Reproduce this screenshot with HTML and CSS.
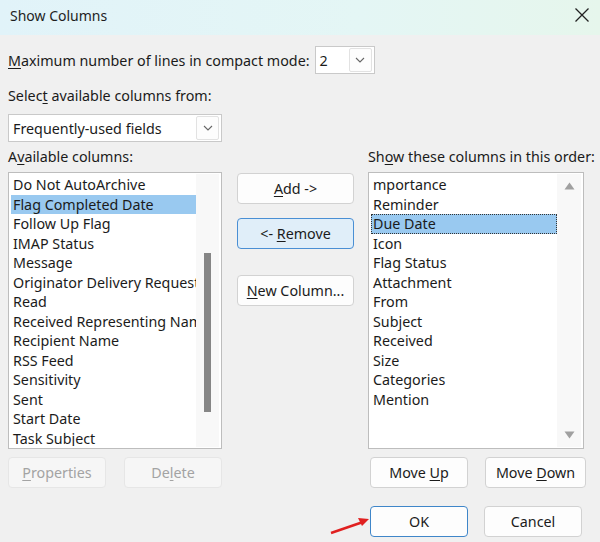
FILE: index.html
```html
<!DOCTYPE html>
<html>
<head>
<meta charset="utf-8">
<link rel="stylesheet" href="styles.css">
</head>
<body>
<div class="dialog">
  <div class="titlebar">
    <span class="title">Show Columns</span>
    <svg class="close" width="16" height="16" viewBox="0 0 16 16"><path d="M1.5 1.5 L14.5 14.5 M14.5 1.5 L1.5 14.5" stroke="#222" stroke-width="1.3" fill="none"/></svg>
  </div>
  <div class="content">
    <div class="row1">
      <span class="lbl"><u>M</u>aximum number of lines in compact mode:</span>
      <div class="combo small"><span class="val">2</span><span class="arrowbox"><svg width="10" height="6" viewBox="0 0 10 6"><path d="M1 1 L5 5 L9 1" stroke="#666" stroke-width="1.1" fill="none"/></svg></span></div>
    </div>
    <div class="lbl sel-label">Selec<u>t</u> available columns from:</div>
    <div class="combo wide"><span class="val">Frequently-used fields</span><span class="arrowbox"><svg width="10" height="6" viewBox="0 0 10 6"><path d="M1 1 L5 5 L9 1" stroke="#666" stroke-width="1.1" fill="none"/></svg></span></div>

    <div class="grid">
      <div class="lbl colhead">A<u>v</u>ailable columns:</div>
      <div></div>
      <div class="lbl colhead">Sh<u>o</u>w these columns in this order:</div>

      <div class="list">
        <div class="items">
          <div class="item">Do Not AutoArchive</div>
          <div class="item selected">Flag Completed Date</div>
          <div class="item">Follow Up Flag</div>
          <div class="item">IMAP Status</div>
          <div class="item">Message</div>
          <div class="item">Originator Delivery Request</div>
          <div class="item">Read</div>
          <div class="item">Received Representing Name</div>
          <div class="item">Recipient Name</div>
          <div class="item">RSS Feed</div>
          <div class="item">Sensitivity</div>
          <div class="item">Sent</div>
          <div class="item">Start Date</div>
          <div class="item">Task Subject</div>
        </div>
        <div class="scroll"><div class="thumb"></div></div>
      </div>

      <div class="midbtns">
        <button class="btn"><u>A</u>dd -&gt;</button>
        <button class="btn focus">&lt;- <u>R</u>emove</button>
        <button class="btn newcol"><u>N</u>ew Column...</button>
      </div>

      <div class="list">
        <div class="items">
          <div class="item">mportance</div>
          <div class="item">Reminder</div>
          <div class="item selected dotted">Due Date</div>
          <div class="item">Icon</div>
          <div class="item">Flag Status</div>
          <div class="item">Attachment</div>
          <div class="item">From</div>
          <div class="item">Subject</div>
          <div class="item">Received</div>
          <div class="item">Size</div>
          <div class="item">Categories</div>
          <div class="item">Mention</div>
        </div>
        <div class="scroll arrows">
          <svg width="11" height="8" viewBox="0 0 11 8"><path d="M5.5 0.5 L10.5 7.5 L0.5 7.5 Z" fill="#a0a0a0"/></svg>
          <svg width="11" height="8" viewBox="0 0 11 8"><path d="M0.5 0.5 L10.5 0.5 L5.5 7.5 Z" fill="#a0a0a0"/></svg>
        </div>
      </div>

      <div class="pair">
        <button class="btn disabled"><u>P</u>roperties</button>
        <button class="btn disabled">De<u>l</u>ete</button>
      </div>
      <div></div>
      <div class="pair">
        <button class="btn">Move <u>U</u>p</button>
        <button class="btn">Move <u>D</u>own</button>
      </div>
    </div>

    <div class="footer">
      <button class="btn focus-ok">OK</button>
      <button class="btn">Cancel</button>
    </div>
  </div>
  <svg class="redarrow" width="44" height="22" viewBox="0 0 44 22"><path d="M2 19 L34 8" stroke="#e02020" stroke-width="2.4" fill="none"/><path d="M40 5 L29 4 L33 12 Z" fill="#e02020"/></svg>
</div>
</body>
</html>
```
FILE: styles.css
```css
* { box-sizing: border-box; }
html, body { margin: 0; padding: 0; }
body {
  width: 600px;
  height: 542px;
  background: #f0f0f0;
  font-family: "Noto Sans", "Open Sans", sans-serif;
  font-size: 14.3px;
  color: #1b1b1b;
  overflow: hidden;
}
.dialog { position: relative; width: 600px; height: 542px; }
.titlebar {
  height: 35px;
  display: flex;
  align-items: center;
  justify-content: space-between;
  padding: 0 10px 5px 10px;
  background: linear-gradient(90deg, #e1f3f9 0%, #e4f6f5 60%, #e6f6ec 100%);
}
.title { font-size: 14px; color: #1e1e1e; }
.close { margin-right: 0; }
.content { padding: 0 8px; }
u { text-decoration-thickness: 1px; text-underline-offset: 2px; }
.lbl { white-space: nowrap; }
.row1 {
  display: flex;
  align-items: center;
  margin-top: 11px;
  gap: 5px;
}
.combo {
  display: flex;
  align-items: center;
  justify-content: space-between;
  height: 28px;
  background: #fff;
  border: 1px solid #c9c9c9;
  padding: 0 2px 0 4px;
}
.combo.small { width: 60px; }
.combo.wide { width: 214px; margin-top: 9px; }
.arrowbox {
  width: 23px;
  height: 24px;
  border: 1px solid #e2e2e2;
  border-radius: 2px;
  display: flex;
  align-items: center;
  justify-content: center;
  background: #fdfdfd;
}
.sel-label { margin-top: 12px; }
.grid {
  display: grid;
  grid-template-columns: 214px 117px 215px;
  column-gap: 15px;
  margin-top: 3px;
}
.grid > :nth-child(3n) { margin-left: -1px; }
.colhead { height: 27px; line-height: 24px; }
.list {
  height: 277px;
  background: #fff;
  border: 1px solid #bdbdbd;
  display: flex;
  padding: 2px;
}
.items { flex: 1; min-width: 0; overflow: hidden; }
.item {
  height: 19.5px;
  line-height: 19.5px;
  padding-left: 2px;
  white-space: nowrap;
  overflow: hidden;
}
.item.selected { background: #99c9f0; }
.item.dotted { outline: 1px dotted #333; outline-offset: -1px; }
.scroll {
  width: 23px;
  background: #f8f8f8;
  margin: -1px 0;
  display: flex;
  justify-content: center;
}
.thumb {
  width: 7px;
  height: 159px;
  margin-top: 79px;
  background: #868686;
}
.scroll.arrows {
  flex-direction: column;
  justify-content: space-between;
  align-items: center;
  padding: 8px 0 8px;
  width: 24px;
}
.midbtns {
  display: flex;
  flex-direction: column;
  padding-top: 1px;
}
.btn {
  font-family: inherit;
  font-size: 14.3px;
  color: #1b1b1b;
  background: #fdfdfd;
  border: 1px solid #d2d2d2;
  border-radius: 4px;
  height: 31px;
  padding: 0;
  cursor: default;
}
.midbtns .btn { width: 117px; margin-bottom: 14px; }
.midbtns .btn.newcol { margin-top: 12px; }
.btn.focus { background: #e0eef9; border: 1.5px solid #4a8fd4; }
.btn.focus-ok { border: 1.5px solid #3f86c9; }
.btn.disabled { color: #a3a3a3; background: #f6f6f6; border-color: #e6e6e6; }
.pair {
  display: flex;
  justify-content: space-between;
  margin-top: 8px;
}
.grid > .pair:first-of-type { padding: 0 1px 0 2px; }
.pair .btn { width: 98px; height: 31px; }
.grid > .pair:last-child { padding-left: 2px; }
.grid > .pair:last-child .btn:last-child { width: 101px; margin-right: -2px; }
.footer {
  display: flex;
  gap: 16px;
  margin-left: 362px;
  margin-top: 18px;
}
.footer .btn { width: 98px; height: 31px; }
.redarrow { position: absolute; left: 329px; top: 514px; }
```
